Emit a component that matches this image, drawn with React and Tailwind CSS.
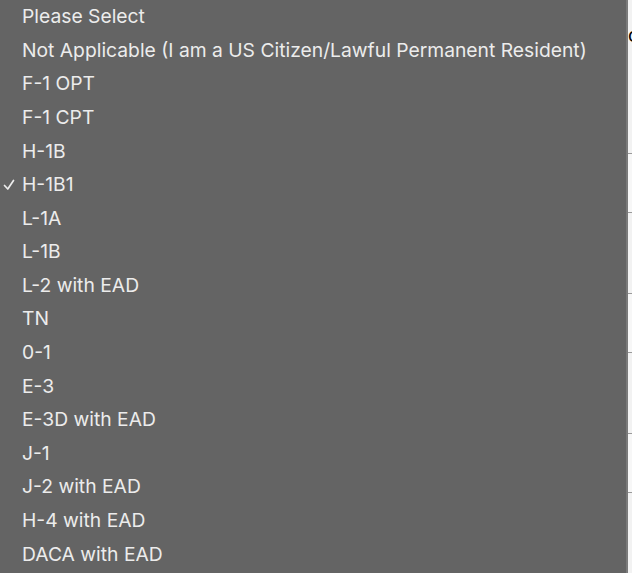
import React from 'react';

const options = [
  'Please Select',
  'Not Applicable (I am a US Citizen/Lawful Permanent Resident)',
  'F-1 OPT',
  'F-1 CPT',
  'H-1B',
  'H-1B1',
  'L-1A',
  'L-1B',
  'L-2 with EAD',
  'TN',
  '0-1',
  'E-3',
  'E-3D with EAD',
  'J-1',
  'J-2 with EAD',
  'H-4 with EAD',
  'DACA with EAD',
];

const selected = 'H-1B1';

const Check = () => (
  <svg width="14" height="14" viewBox="0 0 14 14" className="ml-[2px]">
    <path d="M2.5 7.5 L5.8 11 L11.5 2.5" fill="none" stroke="#ececec" strokeWidth="1.7" strokeLinecap="round" strokeLinejoin="round" />
  </svg>
);

const App = () => {
  return (
    <div className="w-[632px] h-[573px] overflow-hidden flex bg-[#f2f2f2]" style={{ fontFamily: 'Inter, "Liberation Sans", Arial, sans-serif' }}>
      <ul className="w-[626px] shrink-0 h-full bg-[#646464] text-[#ececec] text-[19.3px]">
        {options.map((opt) => (
          <li key={opt} className="h-[33.6px] flex items-center whitespace-nowrap">
            <span className="w-[22px] flex items-center">{opt === selected ? <Check /> : null}</span>
            <span className="leading-none">{opt}</span>
          </li>
        ))}
      </ul>
      <div className="w-[2px] h-full bg-[#7a7a7a]" />
      <div className="flex-1 flex flex-col overflow-hidden">
        <div className="h-[153px] pt-[26px] text-[19px] text-black leading-none">c</div>
        <div className="h-[60px] border-y border-[#9a9a9a] bg-[#f7f7f7]" />
        <div className="h-[80px]" />
        <div className="h-[60px] border-y border-[#9a9a9a] bg-[#f7f7f7]" />
        <div className="h-[80px]" />
        <div className="h-[60px] border-y border-[#9a9a9a] bg-[#f7f7f7]" />
      </div>
    </div>
  );
};

export default App;
